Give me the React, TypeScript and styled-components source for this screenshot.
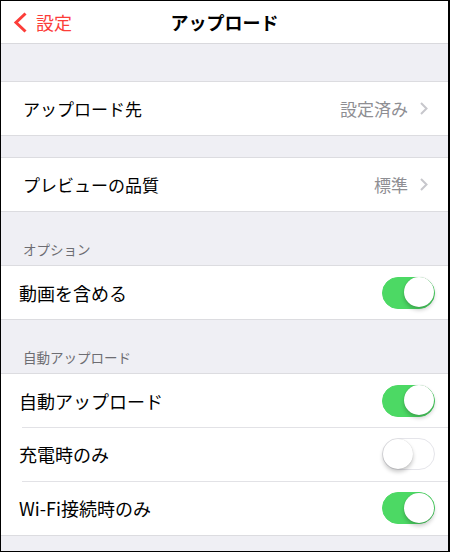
import styled, { createGlobalStyle } from "styled-components";

const GlobalStyle = createGlobalStyle`
    body {
        margin: 0;
        font-family: "Noto Sans CJK JP", "Noto Sans", sans-serif;
    }
`;

const Frame = styled.div`
    width: 450px;
    height: 552px;
    box-sizing: border-box;
    border: 1px solid #000;
    border-right-width: 2px;
    background: #efeff4;
    overflow: hidden;
`;

const NavBar = styled.div`
    height: 42px;
    background: #fff;
    border-bottom: 1px solid #d9d9dd;
    display: grid;
    grid-template-columns: 1fr auto 1fr;
    align-items: center;
`;

const Back = styled.div`
    display: flex;
    align-items: center;
    gap: 8px;
    padding-left: 12px;
    color: #fc3d39;
    font-size: 18px;
`;

const Title = styled.div`
    font-size: 18px;
    font-weight: 700;
    color: #000;
`;

const Spacer = styled.div<{ $h: number }>`
    height: ${(p) => p.$h}px;
`;

const SectionHeader = styled.div`
    height: 53px;
    box-sizing: border-box;
    display: flex;
    align-items: flex-end;
    padding: 0 0 6px 22px;
    font-size: 13.5px;
    color: #6d6d72;
`;

const Group = styled.div`
    background: #fff;
    border-top: 1px solid #dcdce0;
    border-bottom: 1px solid #dcdce0;
`;

const Row = styled.div<{ $indent: number; $size: number }>`
    height: 53px;
    display: flex;
    align-items: center;
    padding-left: ${(p) => p.$indent}px;
    font-size: ${(p) => p.$size}px;
    color: #000;
    position: relative;

    & + & {
        height: 54px;
    }

    & + &::before {
        content: "";
        position: absolute;
        top: 0;
        left: 21px;
        right: 0;
        height: 1px;
        background: #e2e2e6;
    }
`;

const Label = styled.div`
    flex: 1;
`;

const Value = styled.div`
    display: flex;
    align-items: center;
    gap: 12px;
    padding-right: 20px;
    color: #8e8e93;
    font-size: 17px;
`;

const Track = styled.div<{ $on: boolean }>`
    width: 53px;
    height: 32px;
    box-sizing: border-box;
    margin-right: 13px;
    border-radius: 16px;
    position: relative;
    background: ${(p) => (p.$on ? "#4cd964" : "#fff")};
    border: 1.5px solid ${(p) => (p.$on ? "#4cd964" : "#e5e5ea")};
`;

const Knob = styled.div<{ $on: boolean }>`
    position: absolute;
    top: -0.5px;
    left: ${(p) => (p.$on ? "21px" : "-0.5px")};
    width: 30px;
    height: 30px;
    border-radius: 50%;
    background: #fff;
    box-shadow: 0 3px 4px rgba(0, 0, 0, 0.22), 0 0 1px rgba(0, 0, 0, 0.2);
`;

const Toggle = ({ on }: { on: boolean }) => (
    <Track $on={on}>
        <Knob $on={on} />
    </Track>
);

const Chevron = () => (
    <svg width="8" height="13" viewBox="0 0 8 13">
        <path d="M1 1 L6.5 6.5 L1 12" fill="none" stroke="#c7c7cc" strokeWidth="2" />
    </svg>
);

export default function App() {
    return (
        <>
            <GlobalStyle />
            <Frame>
                <NavBar>
                    <Back>
                        <svg width="15" height="21" viewBox="0 0 15 21">
                            <path d="M12.5 1.5 L3 10.5 L12.5 19.5" fill="none" stroke="#fc3d39" strokeWidth="3" />
                        </svg>
                        設定
                    </Back>
                    <Title>アップロード</Title>
                    <div />
                </NavBar>
                <Spacer $h={37} />
                <Group>
                    <Row $indent={22} $size={17}>
                        <Label>アップロード先</Label>
                        <Value>
                            設定済み
                            <Chevron />
                        </Value>
                    </Row>
                </Group>
                <Spacer $h={21} />
                <Group>
                    <Row $indent={22} $size={17}>
                        <Label>プレビューの品質</Label>
                        <Value>
                            標準
                            <Chevron />
                        </Value>
                    </Row>
                </Group>
                <SectionHeader>オプション</SectionHeader>
                <Group>
                    <Row $indent={18} $size={18}>
                        <Label>動画を含める</Label>
                        <Toggle on />
                    </Row>
                </Group>
                <SectionHeader>自動アップロード</SectionHeader>
                <Group>
                    <Row $indent={18} $size={18}>
                        <Label>自動アップロード</Label>
                        <Toggle on />
                    </Row>
                    <Row $indent={18} $size={18}>
                        <Label>充電時のみ</Label>
                        <Toggle on={false} />
                    </Row>
                    <Row $indent={18} $size={18}>
                        <Label>Wi-Fi接続時のみ</Label>
                        <Toggle on />
                    </Row>
                </Group>
            </Frame>
        </>
    );
}
